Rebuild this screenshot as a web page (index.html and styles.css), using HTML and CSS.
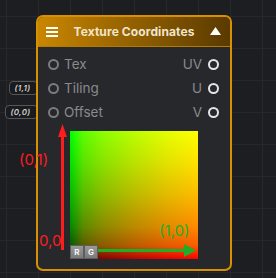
FILE: index.html
```html
<!DOCTYPE html>
<html>
<head>
<meta charset="utf-8">
<link rel="stylesheet" href="styles.css">
</head>
<body>
<div class="canvas">
  <div class="node">
    <div class="header">
      <svg class="menu" width="12" height="10" viewBox="0 0 12 10"><rect x="0" y="0" width="12" height="2" fill="#fff"/><rect x="0" y="4" width="12" height="2" fill="#fff"/><rect x="0" y="8" width="12" height="2" fill="#fff"/></svg>
      <span class="title">Texture Coordinates</span>
      <svg class="collapse" width="11" height="8" viewBox="0 0 11 8"><polygon points="5.5,0 11,8 0,8" fill="#fff"/></svg>
    </div>
    <div class="body">
      <div class="row">
        <span class="sock in"></span><span class="label">Tex</span>
        <span class="spacer"></span>
        <span class="label">UV</span><span class="sock out"></span>
      </div>
      <div class="row">
        <span class="chip">(1,1)</span>
        <span class="sock in"></span><span class="label">Tiling</span>
        <span class="spacer"></span>
        <span class="label">U</span><span class="sock out"></span>
      </div>
      <div class="row">
        <span class="chip wide">(0,0)</span>
        <span class="sock in"></span><span class="label">Offset</span>
        <span class="spacer"></span>
        <span class="label">V</span><span class="sock out"></span>
      </div>
      <div class="plot">
        <div class="uv">
          <div class="channels"><span class="ch">R</span><span class="ch">G</span></div>
        </div>
      </div>
    </div>
    <svg class="axes" width="196" height="256" viewBox="36 15 196 256">
      <rect x="61" y="134" width="3" height="116" fill="#ff1c1c"/>
      <polygon points="62.5,124 58,137 67,137" fill="#ff1c1c"/>
      <rect x="98" y="249" width="88" height="3" fill="#1fae2a"/>
      <polygon points="196,250.5 184,244 184,257" fill="#1fae2a"/>
    </svg>
    <span class="axis-label y1">(0,1)</span>
    <span class="axis-label origin">0,0</span>
    <span class="axis-label x1">(1,0)</span>
  </div>
</div>
</body>
</html>
```

FILE: styles.css
```css
html, body {
  margin: 0;
  padding: 0;
}
body {
  width: 276px;
  height: 278px;
  overflow: hidden;
  font-family: Inter, "Noto Sans", sans-serif;
}
.canvas {
  position: relative;
  z-index: 0;
  width: 276px;
  height: 278px;
  background-color: #1d1e21;
  background-image:
    linear-gradient(to right, #27282c 1px, transparent 1px),
    linear-gradient(to bottom, #27282c 1px, transparent 1px);
  background-size: 32px 32px;
  background-position: 6px 16px;
}
.node {
  position: absolute;
  left: 36px;
  top: 15px;
  width: 192px;
  height: 252px;
  border: 2px solid #d99000;
  border-radius: 7px;
  background: #27282c;
  display: flex;
  flex-direction: column;
}
.header {
  height: 30px;
  display: flex;
  align-items: center;
  padding: 0 9px 0 8px;
  background: linear-gradient(to right, #c98600, #5a3a00);
  border-radius: 5px 5px 0 0;
  border-bottom: 1px solid #b67a00;
  box-sizing: border-box;
}
.menu { flex: none; }
.title {
  flex: 1;
  text-align: center;
  color: #f1e6cf;
  font-weight: 700;
  font-size: 12px;
  letter-spacing: 0.1px;
}
.collapse { flex: none; margin-top: -1px; }
.body {
  flex: 1;
  display: flex;
  flex-direction: column;
  padding-top: 5px;
}
.row {
  position: relative;
  height: 24px;
  display: flex;
  align-items: center;
  padding: 0 11px 0 10px;
}
.spacer { flex: 1; }
.label {
  color: #8a8a8c;
  font-size: 13.5px;
}
.sock {
  width: 7px;
  height: 7px;
  border-radius: 50%;
  border: 2px solid #7c7c7e;
  flex: none;
}
.sock.in { margin-right: 5px; }
.sock.out { margin-left: 6px; border-color: #e6e6e6; }
.chip {
  position: absolute;
  right: 100%;
  margin-right: 0;
  top: 5px;
  width: 29px;
  height: 14px;
  box-sizing: border-box;
  border: 1px solid #55565a;
  border-radius: 4px;
  background: #1a1b1d;
  color: #d0d0d0;
  font-size: 8px;
  font-style: italic;
  font-weight: 600;
  letter-spacing: 0.3px;
  display: flex;
  align-items: center;
  justify-content: center;
  padding-right: 2px;
  z-index: -1;
}
.chip.wide { width: 33px; }
.plot {
  margin-top: 7px;
  padding-left: 32px;
}
.uv {
  position: relative;
  width: 128px;
  height: 128px;
  background:
    linear-gradient(to top, rgb(0,0,0) 0%, rgb(0,89,0) 10%, rgb(0,137,0) 25%, rgb(0,186,0) 50%, rgb(0,225,0) 75%, rgb(0,255,0) 100%),
    linear-gradient(to right, rgb(0,0,0) 0%, rgb(89,0,0) 10%, rgb(137,0,0) 25%, rgb(186,0,0) 50%, rgb(225,0,0) 75%, rgb(255,0,0) 100%);
  background-blend-mode: screen;
}
.channels {
  position: absolute;
  left: 0;
  bottom: 0;
  display: flex;
}
.ch {
  width: 14px;
  height: 14px;
  box-sizing: border-box;
  border: 1px solid #5d5d5f;
  background: linear-gradient(#9a9a9a, #7a7a7a);
  color: #f4f4f4;
  font-size: 8px;
  font-weight: 700;
  display: flex;
  align-items: center;
  justify-content: center;
}
.axes {
  position: absolute;
  left: -2px;
  top: -2px;
  pointer-events: none;
}
.axis-label {
  position: absolute;
  font-size: 15px;
  line-height: 15px;
  white-space: nowrap;
}
.y1 { left: -19px; top: 135px; color: #ff1c1c; }
.origin { left: 1px; top: 216px; color: #ff1c1c; }
.x1 { left: 121px; top: 206px; color: #1fae2a; }
```
